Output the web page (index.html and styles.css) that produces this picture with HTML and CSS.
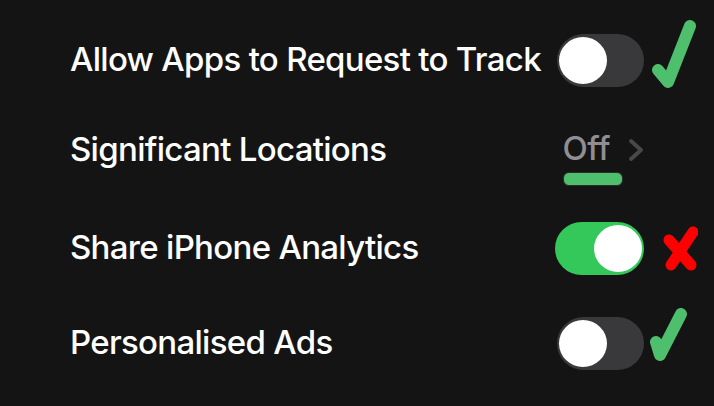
FILE: index.html
```html
<!DOCTYPE html>
<html lang="en">
<head>
  <meta charset="UTF-8">
  <title>Privacy Settings</title>
  <link rel="stylesheet" href="styles.css">
</head>
<body>
  <div class="settings">
    <div class="row">
      <span class="label">Allow Apps to Request to Track</span>
      <div class="control"><div class="toggle"><div class="knob"></div></div></div>
      <div class="mark">
        <svg width="50" height="80" viewBox="0 0 50 80"><path d="M10 50 L20 62 L42 6" fill="none" stroke="#4dbf6d" stroke-width="12" stroke-linecap="round" stroke-linejoin="round"/></svg>
      </div>
    </div>

    <div class="row">
      <span class="label">Significant Locations</span>
      <div class="control">
        <span class="value">Off<span class="underline"></span></span>
        <svg class="chevron" width="16" height="24" viewBox="0 0 16 24"><path d="M3 3 L13 12 L3 21" fill="none" stroke="#48484a" stroke-width="4" stroke-linecap="round" stroke-linejoin="round"/></svg>
      </div>
      <div class="mark"></div>
    </div>

    <div class="row">
      <span class="label">Share iPhone Analytics</span>
      <div class="control"><div class="toggle on"><div class="knob"></div></div></div>
      <div class="mark">
        <svg width="50" height="60" viewBox="0 0 50 60"><path d="M21 22 L43 47 M45 14 L23 47" fill="none" stroke="#ff0000" stroke-width="11" stroke-linecap="round"/></svg>
      </div>
    </div>

    <div class="row">
      <span class="label">Personalised Ads</span>
      <div class="control"><div class="toggle"><div class="knob"></div></div></div>
      <div class="mark">
        <svg width="50" height="70" viewBox="0 0 50 70"><path d="M8 34 L12 47 L33 6" fill="none" stroke="#4dbf6d" stroke-width="12" stroke-linecap="round" stroke-linejoin="round"/></svg>
      </div>
    </div>
  </div>
</body>
</html>
```

FILE: styles.css
```css
body {
  margin: 0;
  background-color: #141414;
  font-family: Inter, "Noto Sans", sans-serif;
  color: #fff;
  width: 714px;
  height: 406px;
  overflow: hidden;
}

.settings {
  display: grid;
  grid-template-rows: 90px 90px 106px 84px;
  padding: 15px 0 0 70px;
}

.row {
  display: flex;
  align-items: center;
}

.label {
  flex: 1;
  font-size: 33px;
  font-weight: 500;
  letter-spacing: -0.7px;
  white-space: nowrap;
  margin-top: -3px;
}

.control {
  width: 90px;
  display: flex;
  justify-content: flex-end;
  align-items: center;
}

.toggle {
  width: 87px;
  height: 53px;
  border-radius: 27px;
  background-color: #39393c;
  box-sizing: border-box;
  padding: 3px 2px;
  display: flex;
}

.toggle.on {
  width: 89px;
  background-color: #34c759;
  justify-content: flex-end;
}

.knob {
  width: 48px;
  height: 47px;
  border-radius: 50%;
  background-color: #fff;
}

.value {
  position: relative;
  font-size: 33px;
  font-weight: 500;
  letter-spacing: -0.5px;
  color: #8e8e93;
  margin-right: 18px;
  margin-top: -4px;
}

.underline {
  position: absolute;
  left: 1px;
  top: 44px;
  width: 58px;
  height: 12px;
  border-radius: 6px;
  background-color: #4dbf6d;
  border: 1px solid #2c2c2c;
}

.mark {
  width: 70px;
  box-sizing: border-box;
  display: flex;
  align-items: center;
  padding-left: 4px;
}
```
